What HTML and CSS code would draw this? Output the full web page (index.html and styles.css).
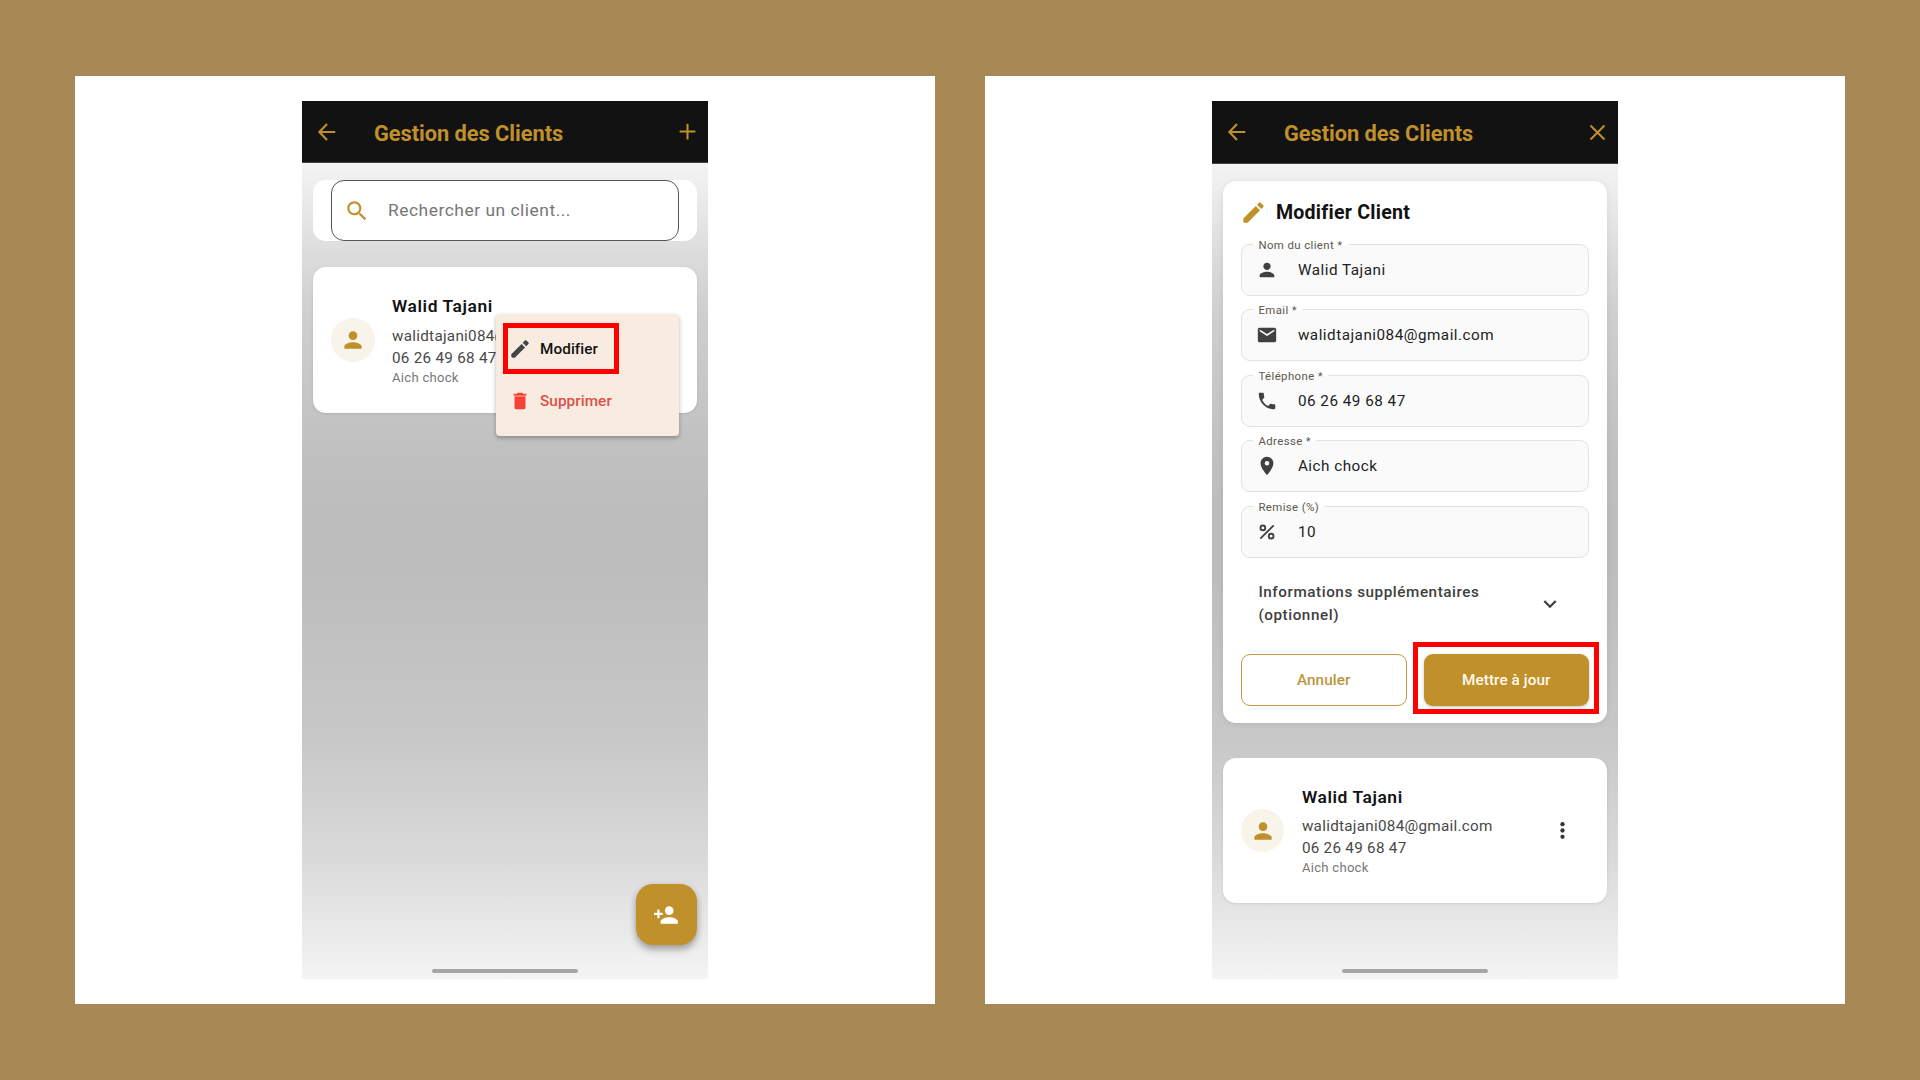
FILE: index.html
```html
<!DOCTYPE html>
<html lang="fr">
<head>
<meta charset="utf-8">
<title>Gestion des Clients</title>
<link rel="stylesheet" href="styles.css">
</head>
<body>
<svg class="defs" aria-hidden="true">
  <symbol id="i-back" viewBox="0 0 24 24"><path d="M21 12H4M12 3.200 3.700 12l8.300 8.800" fill="none" stroke="currentColor" stroke-width="2.300"/></symbol>
  <symbol id="i-plus" viewBox="0 0 24 24"><path d="M12 3v18M3 12h18" fill="none" stroke="currentColor" stroke-width="2.300"/></symbol>
  <symbol id="i-close" viewBox="0 0 24 24"><path d="M4 4l16 16M20 4l-16 16" fill="none" stroke="currentColor" stroke-width="2.300"/></symbol>
  <symbol id="i-search" viewBox="0 0 24 24"><path d="M15.500 14h-.79l-.28-.27A6.471 6.471 0 0 0 16 9.500 6.500 6.500 0 1 0 9.500 16c1.610 0 3.090-.59 4.230-1.570l.27.28v.79l5 4.990L20.490 19l-4.990-5zm-6 0C7.010 14 5 11.990 5 9.500S7.010 5 9.500 5 14 7.010 14 9.500 11.990 14 9.500 14z"/></symbol>
  <symbol id="i-person" viewBox="0 0 24 24"><path d="M12 12c2.210 0 4-1.790 4-4s-1.790-4-4-4-4 1.790-4 4 1.790 4 4 4zm0 2c-2.670 0-8 1.340-8 4v2h16v-2c0-2.660-5.330-4-8-4z"/></symbol>
  <symbol id="i-add-person" viewBox="0 0 24 24"><path d="M15 12c2.210 0 4-1.790 4-4s-1.790-4-4-4-4 1.790-4 4 1.790 4 4 4zm-9-2V7H4v3H1v2h3v3h2v-3h3v-2H6zm9 4c-2.670 0-8 1.340-8 4v2h16v-2c0-2.660-5.330-4-8-4z"/></symbol>
  <symbol id="i-edit" viewBox="0 0 24 24"><path d="M3 17.250V21h3.750L17.810 9.940l-3.750-3.750L3 17.250zM20.710 7.040a1 1 0 0 0 0-1.410l-2.340-2.340a1 1 0 0 0-1.410 0l-1.830 1.830 3.750 3.750 1.830-1.830z"/></symbol>
  <symbol id="i-pencil" viewBox="0 0 24 24"><path d="M2.500 17.700v2.300c0 .9.600 1.500 1.500 1.500h2.300L17.500 10.300 13.700 6.500 2.500 17.700zM21.200 6.600c.5-.5.5-1.100 0-1.600l-2.200-2.200c-.5-.5-1.100-.5-1.600 0L14.900 5.300l3.800 3.800 2.500-2.500z"/></symbol>
  <symbol id="i-trash" viewBox="0 0 24 24"><path d="M6 19c0 1.100.9 2 2 2h8c1.100 0 2-.9 2-2V7H6v12z"/><path opacity=".8" d="M6 6h12v1H6z"/><path d="M19 4h-3.500l-1-1h-5l-1 1H5v2h14V4z"/></symbol>
  <symbol id="i-mail" viewBox="0 0 24 24"><path d="M20 4H4c-1.100 0-2 .9-2 2v12c0 1.100.9 2 2 2h16c1.100 0 2-.9 2-2V6c0-1.100-.9-2-2-2zm0 4-8 5-8-5V6l8 5 8-5v2z"/></symbol>
  <symbol id="i-phone" viewBox="0 0 24 24"><path d="M6.620 10.790c1.440 2.830 3.760 5.140 6.590 6.590l2.200-2.200c.27-.27.67-.36 1.020-.24 1.120.37 2.330.57 3.570.57.55 0 1 .45 1 1V20c0 .55-.45 1-1 1-9.390 0-17-7.610-17-17 0-.55.45-1 1-1h3.500c.55 0 1 .45 1 1 0 1.250.2 2.450.57 3.570.11.35.03.74-.25 1.020l-2.200 2.200z"/></symbol>
  <symbol id="i-pin" viewBox="0 0 24 24"><path d="M12 2C8.130 2 5 5.130 5 9c0 5.250 7 13 7 13s7-7.750 7-13c0-3.870-3.130-7-7-7zm0 9.500a2.500 2.500 0 0 1 0-5 2.500 2.500 0 0 1 0 5z"/></symbol>
  <symbol id="i-percent" viewBox="0 0 24 24"><g fill="none" stroke="currentColor" stroke-width="2"><path d="M19.300 4.700 4.700 19.300"/><circle cx="7.500" cy="7.500" r="2.600"/><circle cx="16.500" cy="16.500" r="2.600"/></g></symbol>
  <symbol id="i-chevron" viewBox="0 0 24 24"><path d="M6.300 9 12 14.700 17.700 9" fill="none" stroke="currentColor" stroke-width="2.300"/></symbol>
  <symbol id="i-dots" viewBox="0 0 24 24"><circle cx="12" cy="5.900" r="2.050"/><circle cx="12" cy="12" r="2.050"/><circle cx="12" cy="18.100" r="2.050"/></symbol>
</svg>

<main class="board">
  <section class="panel">
    <div class="phone">
      <header class="appbar">
        <svg class="icon nav"><use href="#i-back"/></svg>
        <h1 class="title">Gestion des Clients</h1>
        <svg class="icon action"><use href="#i-plus"/></svg>
      </header>
      <div class="content">
        <div class="search-card">
          <div class="search">
            <svg class="icon search-icon"><use href="#i-search"/></svg>
            <span class="placeholder">Rechercher un client...</span>
          </div>
        </div>
        <article class="client client-first">
          <div class="avatar"><svg class="icon"><use href="#i-person"/></svg></div>
          <div class="info">
            <span class="name">Walid Tajani</span>
            <span class="line">walidtajani084@gmail.com</span>
            <span class="line">06 26 49 68 47</span>
            <span class="address">Aich chock</span>
          </div>
          <div class="menu">
            <div class="menu-item"><svg class="icon"><use href="#i-pencil"/></svg><span>Modifier</span></div>
            <div class="menu-item danger"><svg class="icon"><use href="#i-trash"/></svg><span>Supprimer</span></div>
            <div class="highlight highlight-menu"></div>
          </div>
        </article>
      </div>
      <div class="fab"><svg class="icon"><use href="#i-add-person"/></svg></div>
      <div class="home-bar"></div>
    </div>
  </section>

  <section class="panel">
    <div class="phone phone-edit">
      <header class="appbar">
        <svg class="icon nav"><use href="#i-back"/></svg>
        <h1 class="title">Gestion des Clients</h1>
        <svg class="icon action"><use href="#i-close"/></svg>
      </header>
      <div class="content">
        <form class="form">
          <h2 class="form-title"><svg class="icon"><use href="#i-edit"/></svg><span>Modifier Client</span></h2>
          <div class="fields">
            <div class="field"><span class="label">Nom du client *</span><svg class="icon"><use href="#i-person"/></svg><span class="value">Walid Tajani</span></div>
            <div class="field"><span class="label">Email *</span><svg class="icon"><use href="#i-mail"/></svg><span class="value">walidtajani084@gmail.com</span></div>
            <div class="field"><span class="label">Téléphone *</span><svg class="icon"><use href="#i-phone"/></svg><span class="value">06 26 49 68 47</span></div>
            <div class="field"><span class="label">Adresse *</span><svg class="icon"><use href="#i-pin"/></svg><span class="value">Aich chock</span></div>
            <div class="field"><span class="label">Remise (%)</span><svg class="icon"><use href="#i-percent"/></svg><span class="value">10</span></div>
          </div>
          <div class="more"><span>Informations supplémentaires<br>(optionnel)</span><svg class="icon"><use href="#i-chevron"/></svg></div>
          <div class="actions">
            <div class="btn outline">Annuler</div>
            <div class="btn filled">Mettre à jour<div class="highlight highlight-btn"></div></div>
          </div>
        </form>
        <article class="client">
          <div class="avatar"><svg class="icon"><use href="#i-person"/></svg></div>
          <div class="info">
            <span class="name">Walid Tajani</span>
            <span class="line">walidtajani084@gmail.com</span>
            <span class="line">06 26 49 68 47</span>
            <span class="address">Aich chock</span>
          </div>
          <svg class="icon dots"><use href="#i-dots"/></svg>
        </article>
      </div>
      <div class="home-bar"></div>
    </div>
  </section>
</main>
</body>
</html>
```
FILE: styles.css
```css
* { box-sizing: border-box; }

body {
  margin: 0;
  width: 1920px;
  height: 1080px;
  overflow: hidden;
  background: #a88854;
  font-family: Roboto, "Liberation Sans", sans-serif;
  color: #121212;
}

.defs { position: absolute; width: 0; height: 0; }
.icon { display: block; flex: none; fill: currentColor; }

.board { display: flex; gap: 50px; padding: 76px 75px; height: 1080px; }
.panel { width: 860px; background: #fff; padding: 25px 0; display: flex; justify-content: center; }

.phone {
  position: relative;
  width: 406px;
  height: 878px;
  background: linear-gradient(#f4f4f4 7%, #dddddd 17%, #cfcfcf 24%, #c1c1c1 39%, #bdbdbd 46%, #bdbdbd 54%, #c8c8c8 73%, #dadada 86.500%, #f4f4f4 100%);
}

.appbar {
  display: flex;
  align-items: center;
  height: 62px;
  padding: 0 10px 0 14px;
  background: #121212;
  border-bottom: 1px solid #444;
  color: #c0902b;
}
.phone-edit .appbar { height: 63px; }
.nav { width: 22px; height: 22px; }
.action { width: 21px; height: 21px; margin-left: auto; }
.title {
  margin: 4px 0 0 36px;
  font-size: 21.800px;
  font-weight: 700;
  line-height: 28px;
  letter-spacing: -.040px;
}

.content { padding: 17px 11px 0; }
.phone-edit .content { padding: 17px 11.400px 0; }

.search-card {
  padding: 0 18px;
  height: 61px;
  border-radius: 13px;
  background: #fff;
}
.search {
  display: flex;
  align-items: center;
  height: 61px;
  padding-left: 11.500px;
  border: 1px solid #555;
  border-radius: 13px;
}
.search-icon { width: 26px; height: 26px; color: #c0902b; }
.placeholder { margin: -2px 0 0 18.500px; font-size: 17.400px; letter-spacing: .520px; color: #767676; }

.client {
  position: relative;
  display: flex;
  align-items: center;
  height: 145.400px;
  padding: 0 17.500px;
  border-radius: 13px;
  background: #fff;
  box-shadow: 0 1px 3px rgba(0, 0, 0, .1);
}
.client-first { margin-top: 26.400px; padding-left: 18px; }
.avatar {
  display: flex;
  align-items: center;
  justify-content: center;
  width: 43.500px;
  height: 43.500px;
  border-radius: 50%;
  background: #f8f4e9;
  color: #c0902b;
}
.avatar .icon { width: 26px; height: 26px; }
.info { display: flex; flex-direction: column; align-items: flex-start; margin-left: 17.500px; }
.name { font-size: 17.400px; line-height: 26px; font-weight: 600; letter-spacing: .580px; margin-bottom: 5.500px; }
.line { font-size: 15.250px; line-height: 22px; letter-spacing: .270px; color: #484848; }
.address { font-size: 13.100px; line-height: 18px; letter-spacing: .270px; color: #777; }
.dots { width: 25px; height: 25px; margin-left: auto; margin-right: 14px; color: #333; }

/* Contextual menu opened over the client card */
.menu {
  position: absolute;
  left: 183px;
  top: 46.600px;
  width: 183px;
  height: 122px;
  padding: 9px 0;
  border-radius: 4px;
  background: #f8ebe0;
  box-shadow: 0 2px 4px rgba(0, 0, 0, .3);
}
.menu-item {
  display: flex;
  align-items: center;
  height: 52px;
  padding-left: 13px;
  font-size: 15.250px;
  font-weight: 500;
  letter-spacing: .100px;
}
.menu-item .icon { width: 22px; height: 22px; margin-right: 9px; color: #444; }
.menu-item.danger, .menu-item.danger .icon { color: #f44336; }
.menu-item.danger span { color: #dc5145; }

.highlight { position: absolute; border: 5px solid #f00; }
.highlight-menu { left: 7px; top: 9px; width: 116px; height: 51px; }
.highlight-btn { left: -10.500px; top: -12px; width: 186px; height: 72px; }

.fab {
  position: absolute;
  right: 11px;
  bottom: 34px;
  display: flex;
  align-items: center;
  justify-content: center;
  width: 61px;
  height: 61px;
  padding-right: 1px;
  border-radius: 17px;
  background: #c0902b;
  color: #fff;
  box-shadow: 0 5px 7px rgba(0, 0, 0, .27), 0 1px 7px rgba(0, 0, 0, .1);
}
.fab .icon { width: 26px; height: 26px; }

.home-bar {
  position: absolute;
  left: 130px;
  bottom: 6px;
  width: 146px;
  height: 4px;
  border-radius: 2px;
  background: #a6a6a6;
}

.form {
  height: 542px;
  margin: 0 0 35px;
  padding: 18px 17.500px 0;
  border-radius: 13px;
  background: #fff;
  box-shadow: 0 1px 6px rgba(0, 0, 0, .08);
}
.form-title {
  display: flex;
  align-items: center;
  height: 26px;
  margin: 0;
  font-size: 19.600px;
  font-weight: 700;
  letter-spacing: .240px;
}
.form-title .icon { width: 27px; height: 27px; margin: 0 8.500px 0 -.5px; color: #c0902b; }
.fields { display: flex; flex-direction: column; gap: 13.400px; padding-top: 19px; }
.field {
  position: relative;
  display: flex;
  align-items: center;
  height: 52px;
  padding-left: 14px;
  border: 1px solid #e2e2e2;
  border-radius: 9px;
  background: #fafafa;
  color: #404040;
}
.field .icon { width: 22px; height: 22px; }
.value { margin-left: 20px; font-size: 15.250px; letter-spacing: .500px; color: #222; }
.label {
  position: absolute;
  left: 11.500px;
  top: -8px;
  padding: 0 5px;
  font-size: 11.400px;
  line-height: 16px;
  letter-spacing: .400px;
  color: #5d584e;
  background: linear-gradient(#fff 50%, #fafafa 50%);
}
.more {
  display: flex;
  align-items: center;
  justify-content: space-between;
  height: 46px;
  margin-top: 23px;
  padding: 0 27px 0 17.500px;
  font-size: 15.250px;
  font-weight: 500;
  line-height: 23px;
  letter-spacing: .560px;
  color: #404040;
}
.more .icon { width: 24px; height: 24px; }
.actions { display: grid; grid-template-columns: 1fr 1fr; gap: 17px; margin-top: 27px; }
.btn {
  position: relative;
  display: flex;
  align-items: center;
  justify-content: center;
  height: 52px;
  border-radius: 9px;
  font-size: 15.250px;
  font-weight: 500;
  letter-spacing: .100px;
}
.outline { border: 1px solid #c49b42; color: #bd953b; }
.filled { background: #c0902b; color: #fffaf0; box-shadow: 0 1px 3px rgba(0, 0, 0, .25); }
```
